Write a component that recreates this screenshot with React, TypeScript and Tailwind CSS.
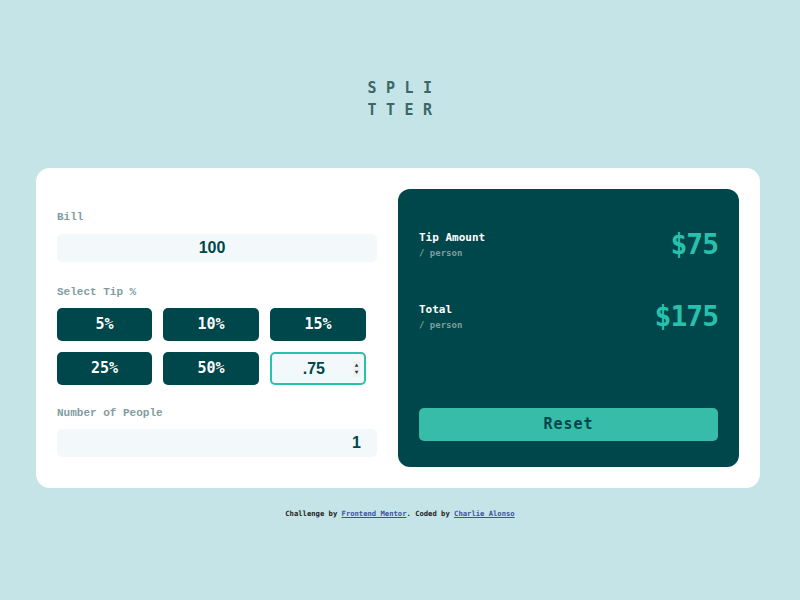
import React, { useState } from 'react';

const tips = ['5%', '10%', '15%', '25%', '50%'];

export default function App() {
  const [bill, setBill] = useState('100');
  const [custom, setCustom] = useState('.75');
  const [people, setPeople] = useState('1');

  return (
    <div className="min-h-[600px] w-full bg-[#c5e4e7] flex flex-col items-center font-['Liberation_Mono',monospace]">
      {/* Logo */}
      <h1 className="mt-[77px] text-[15px] leading-[22px] font-bold text-[#3d6666] tracking-[9.5px] text-center pl-[9px] font-['DejaVu_Sans_Mono',monospace]">
        SPLI
        <br />
        TTER
      </h1>

      {/* Card */}
      <div className="mt-[47px] mr-[4px] w-[724px] h-[320px] bg-white rounded-[14px] p-[21px] flex gap-[21px]">
        <div className="w-[320px] flex flex-col pt-[21px]">
          <label className="text-[11px] font-bold text-[#7f9d9f] leading-[14px]">Bill</label>
          <input
            value={bill}
            onChange={(e) => setBill(e.target.value)}
            className="mt-[10px] h-[28px] w-full rounded-[5px] bg-[#f3f9fa] text-center text-[16px] font-bold text-[#00474b] outline-none font-['Liberation_Sans',Arial,sans-serif] pr-[10px]"
          />

          <label className="mt-[23px] text-[11px] font-bold text-[#7f9d9f] leading-[14px]">Select Tip %</label>
          <div className="mt-[9px] grid grid-cols-[95px_96px_96px] gap-x-[11px] gap-y-[11px]">
            {tips.map((t) => (
              <button
                key={t}
                className="h-[33px] rounded-[5px] bg-[#00474b] text-white text-[15px] font-bold font-['DejaVu_Sans_Mono',monospace]"
              >
                {t}
              </button>
            ))}
            <div className="h-[33px] rounded-[5px] border-2 border-[#26c2ae] bg-[#f3f9fa] flex items-center pr-[4px]">
              <input
                value={custom}
                onChange={(e) => setCustom(e.target.value)}
                className="w-full min-w-0 bg-transparent text-right pr-[28px] text-[16px] font-bold text-[#00474b] outline-none font-['Liberation_Sans',Arial,sans-serif]"
              />
              <div className="flex flex-col items-center justify-center w-[8px] h-[16px] bg-[#eef2f2] text-[#333] text-[6px] leading-[7px]">
                <span>▲</span>
                <span>▼</span>
              </div>
            </div>
          </div>

          <label className="mt-[21px] text-[11px] font-bold text-[#7f9d9f] leading-[14px]">Number of People</label>
          <input
            value={people}
            onChange={(e) => setPeople(e.target.value)}
            className="mt-[9px] h-[28px] w-full rounded-[5px] bg-[#f3f9fa] text-right pr-[16px] text-[16px] font-bold text-[#00474b] outline-none font-['Liberation_Sans',Arial,sans-serif]"
          />
        </div>

        <div className="flex-1 bg-[#00474b] rounded-[12px] px-[21px] pt-[42px] pb-[26px] flex flex-col">
          <div className="flex items-center justify-between">
            <div className="flex flex-col">
              <span className="text-[11px] font-bold text-white leading-[14px] font-['DejaVu_Sans_Mono',monospace]">Tip Amount</span>
              <span className="mt-[2px] text-[9px] font-bold text-[#7f9d9f] leading-[12px] font-['DejaVu_Sans_Mono',monospace]">/ person</span>
            </div>
            <span className="text-[28px] font-bold text-[#26c2ae] leading-none font-['DejaVu_Sans_Mono',monospace] tracking-[-1px]">$75</span>
          </div>
          <div className="mt-[44px] flex items-center justify-between">
            <div className="flex flex-col">
              <span className="text-[11px] font-bold text-white leading-[14px] font-['DejaVu_Sans_Mono',monospace]">Total</span>
              <span className="mt-[2px] text-[9px] font-bold text-[#7f9d9f] leading-[12px] font-['DejaVu_Sans_Mono',monospace]">/ person</span>
            </div>
            <span className="text-[28px] font-bold text-[#26c2ae] leading-none font-['DejaVu_Sans_Mono',monospace] tracking-[-1px]">$175</span>
          </div>
          <button className="mt-auto h-[33px] w-full rounded-[5px] bg-[#36bca8] text-[#00474b] text-[15px] font-bold tracking-[1px] font-['DejaVu_Sans_Mono',monospace]">
            Reset
          </button>
        </div>
      </div>

      <p className="mt-[21px] text-[7.2px] font-bold text-[#222] font-['DejaVu_Sans_Mono',monospace]">
        Challenge by{' '}
        <a href="#" className="text-[#3e52a3] underline">Frontend Mentor</a>. Coded by{' '}
        <a href="#" className="text-[#3e52a3] underline">Charlie Alonso</a>
      </p>
    </div>
  );
}
